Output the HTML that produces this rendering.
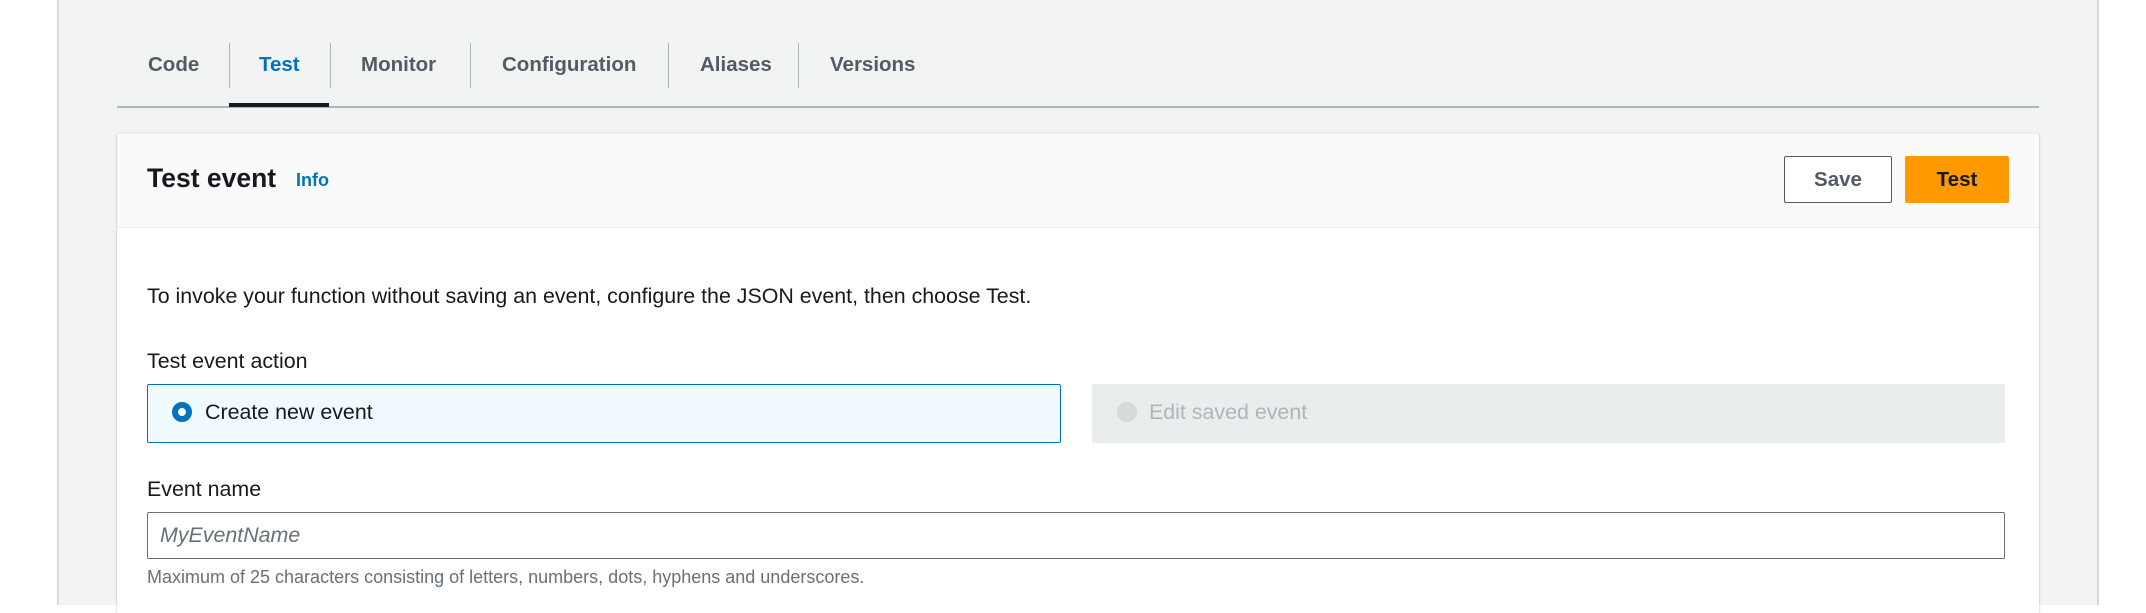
<!DOCTYPE html>
<html><head><meta charset="utf-8"><style>
*{box-sizing:border-box;margin:0;padding:0}
body{width:2146px;height:605px;overflow:hidden;background:#fff;font-family:"Liberation Sans",Arial,sans-serif;position:relative;color:#16191f}
.abs{position:absolute}
.bg{left:57px;top:0;width:2042px;height:605px;background:#f2f3f3;border-left:2px solid #d5dbdb;border-right:2px solid #d5dbdb}
.tab{top:51px;height:28px;font-size:20.5px;font-weight:bold;color:#545b64;line-height:28px;white-space:nowrap}
.div{top:43px;width:1px;height:45px;background:#aab7b8}
.panel{left:117px;top:133px;width:1922px;height:480px;background:#fff;box-shadow:0 1px 2px rgba(0,28,36,.3);border-top:1px solid #eaeded}
.hdr{left:0;top:0;width:100%;height:94px;background:#fafafa;border-bottom:1px solid #eaeded}
.t{font-size:21.4px;white-space:nowrap}
</style></head><body>
<div class="abs bg"></div>
<div class="abs tab" style="left:148px">Code</div>
<div class="abs div" style="left:229px"></div>
<div class="abs tab" style="left:259px;color:#0073bb">Test</div>
<div class="abs div" style="left:330px"></div>
<div class="abs tab" style="left:361px">Monitor</div>
<div class="abs div" style="left:470px"></div>
<div class="abs tab" style="left:502px">Configuration</div>
<div class="abs div" style="left:668px"></div>
<div class="abs tab" style="left:700px">Aliases</div>
<div class="abs div" style="left:798px"></div>
<div class="abs tab" style="left:830px">Versions</div>
<div class="abs" style="left:117px;top:106px;width:1922px;height:2px;background:#aab7b8"></div>
<div class="abs" style="left:229px;top:103px;width:100px;height:4px;background:#16191f"></div>
<div class="abs panel">
 <div class="abs hdr">
  <div class="abs" style="left:30px;top:29px;font-size:26.5px;font-weight:bold;white-space:nowrap">Test event</div>
  <div class="abs" style="left:179px;top:36px;font-size:18px;font-weight:bold;color:#0073bb">Info</div>
  <div class="abs" style="left:1667px;top:22px;width:108px;height:47px;border:1px solid #545b64;border-radius:2px;background:#fff;font-size:20.5px;font-weight:bold;color:#545b64;text-align:center;line-height:45px">Save</div>
  <div class="abs" style="left:1788px;top:22px;width:104px;height:47px;border-radius:2px;background:#ff9900;font-size:20.5px;font-weight:bold;color:#16191f;text-align:center;line-height:47px">Test</div>
 </div>
</div>
<div class="abs t" style="left:147px;top:284px">To invoke your function without saving an event, configure the JSON event, then choose Test.</div>
<div class="abs t" style="left:147px;top:349px">Test event action</div>
<div class="abs" style="left:147px;top:384px;width:914px;height:59px;border:1px solid #0073bb;border-radius:2px;background:#f1faff"></div>
<div class="abs" style="left:172px;top:402px;width:20px;height:20px;border-radius:50%;border:6px solid #0073bb;background:#fff"></div>
<div class="abs t" style="left:205px;top:400px">Create new event</div>
<div class="abs" style="left:1092px;top:384px;width:913px;height:59px;border-radius:2px;background:#eaeded"></div>
<div class="abs" style="left:1117px;top:402px;width:20px;height:20px;border-radius:50%;background:#d5dbdb"></div>
<div class="abs t" style="left:1149px;top:400px;color:#aab7b8">Edit saved event</div>
<div class="abs t" style="left:147px;top:477px">Event name</div>
<div class="abs" style="left:147px;top:512px;width:1858px;height:47px;border:1px solid #687078;border-radius:2px;background:#fff"></div>
<div class="abs t" style="left:160px;top:523px;font-style:italic;color:#687078">MyEventName</div>
<div class="abs" style="left:147px;top:567px;font-size:18px;color:#687078;white-space:nowrap">Maximum of 25 characters consisting of letters, numbers, dots, hyphens and underscores.</div>
</body></html>
